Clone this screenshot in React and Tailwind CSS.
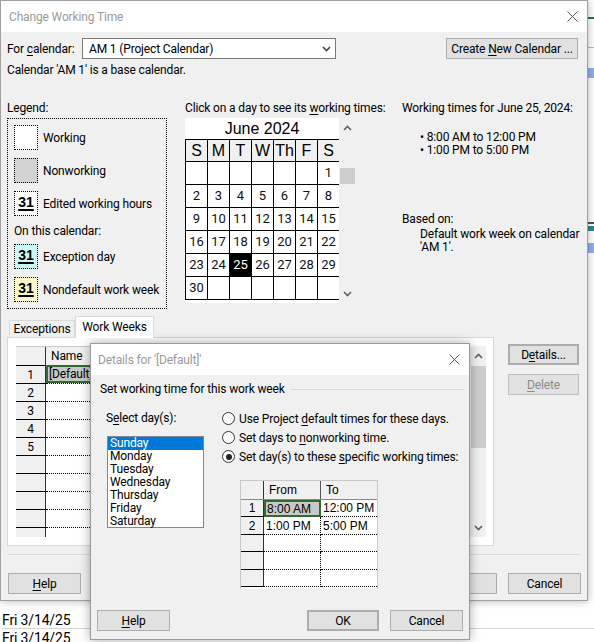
import React from "react";

const ui = "font-['Roboto','Noto_Sans',sans-serif] text-[12px] leading-[14px] tracking-[-0.15px] text-black";
const arial = "font-['Liberation_Sans',Arial,sans-serif] tracking-normal";

function U({ children }) {
  return <span className="underline underline-offset-[2px]">{children}</span>;
}

function Btn({ children, className = "" }) {
  return (
    <div className={`h-[21px] flex items-center justify-center bg-[#e1e1e1] border border-[#adadad] ${className}`}>
      <span className="whitespace-nowrap">{children}</span>
    </div>
  );
}

function CloseX() {
  return (
    <svg width="11" height="11" viewBox="0 0 11 11">
      <path d="M0.5 0.5 L10.5 10.5 M10.5 0.5 L0.5 10.5" stroke="#555" strokeWidth="1" fill="none" />
    </svg>
  );
}

function Chevron({ up, color = "#606060" }) {
  return (
    <svg width="9" height="6" viewBox="0 0 9 6">
      <path d={up ? "M1 5 L4.5 1.5 L8 5" : "M1 1 L4.5 4.5 L8 1"} stroke={color} strokeWidth="1.6" fill="none" />
    </svg>
  );
}

function Swatch({ bg, num }) {
  return (
    <div className={`w-[24px] h-[25px] border border-dotted border-black flex justify-center pt-[3px] ${bg}`}>
      {num && (
        <span className={`${arial} font-bold text-[14px] leading-[14px] underline underline-offset-[2px] decoration-[1.5px]`}>
          31
        </span>
      )}
    </div>
  );
}

function LegendItem({ bg, num, label, className = "" }) {
  return (
    <div className={`flex items-center gap-[5px] ${className}`}>
      <Swatch bg={bg} num={num} />
      <span>{label}</span>
    </div>
  );
}

const weeks = [
  [null, null, null, null, null, null, 1],
  [2, 3, 4, 5, 6, 7, 8],
  [9, 10, 11, 12, 13, 14, 15],
  [16, 17, 18, 19, 20, 21, 22],
  [23, 24, 25, 26, 27, 28, 29],
  [30, null, null, null, null, null, null],
];

function Calendar() {
  const heads = ["S", "M", "T", "W", "Th", "F", "S"];
  return (
    <div className="flex mt-[3px]">
      <div className="w-[154px] h-[185px] bg-white overflow-hidden">
        <div className={`${arial} h-[21px] flex items-center justify-center text-[16px]`}>June 2024</div>
        <div className="grid grid-cols-[repeat(7,21px)] gap-px bg-black p-px w-[155px]">
          {heads.map((h, i) => (
            <div key={i} className={`${arial} h-[21px] bg-[#f0f0f0] flex items-center justify-center text-[16px]`}>
              {h}
            </div>
          ))}
          {weeks.flat().map((d, i) => (
            <div
              key={i}
              className={`h-[22px] flex items-center justify-center text-[13px] tracking-normal ${
                d === 25 ? "bg-black text-white" : "bg-white text-[#111]"
              }`}
            >
              {d}
            </div>
          ))}
        </div>
      </div>
      <div className="w-[16px] h-[185px] flex flex-col items-center">
        <div className="mt-[7px]">
          <Chevron up />
        </div>
        <div className="mt-[37px] w-[15px] h-[16px] bg-[#cdcdcd]" />
        <div className="mt-auto mb-[6px]">
          <Chevron />
        </div>
      </div>
    </div>
  );
}

function WorkWeeksGrid() {
  const rows = [1, 2, 3, 4, 5, null, null, null, null, null];
  return (
    <div className="w-[470px] h-[191px] flex overflow-hidden">
      <div className="w-[454px] flex flex-col">
        <div className="flex h-[19px] shrink-0 bg-[#f0f0f0] border-t border-[#c8c8c8]">
          <div className="w-[30px] border-r border-[#333]" />
          <div className="pl-[5px] flex items-center">Name</div>
        </div>
        {rows.map((n, i) => (
          <div key={i} className="flex h-[18px] shrink-0">
            <div className="w-[30px] bg-[#f0f0f0] border-t border-black border-r border-r-[#333] flex items-center justify-center">
              {n}
            </div>
            {i === 0 ? (
              <div className="w-[60px] bg-[#c8c8c8] border-2 border-[#2f6b2f] flex items-center pl-[1px] overflow-hidden whitespace-nowrap">
                [Default]
              </div>
            ) : (
              <div className="flex-1 border-t border-dotted border-black" />
            )}
          </div>
        ))}
      </div>
      <div className="w-[16px] bg-[#f0f0f0] flex flex-col items-center">
        <div className="mt-[7px]">
          <Chevron up />
        </div>
        <div className="mt-[7px] w-[15px] h-[82px] bg-[#cdcdcd]" />
        <div className="mt-auto mb-[6px]">
          <Chevron />
        </div>
      </div>
    </div>
  );
}

function Radio({ on, children }) {
  return (
    <div className="flex items-center h-[19px]">
      <div className="w-[13px] h-[13px] rounded-full border border-[#333] bg-white flex items-center justify-center">
        {on && <div className="w-[6px] h-[6px] rounded-full bg-[#222]" />}
      </div>
      <span className="ml-[4px] whitespace-nowrap">{children}</span>
    </div>
  );
}

function TimeGrid() {
  const rows = [
    ["8:00 AM", "12:00 PM", 17],
    ["1:00 PM", "5:00 PM", 18],
    ["", "", 17],
    ["", "", 18],
    ["", "", 17],
  ];
  return (
    <div className={`${arial} w-[138px] h-[109px] bg-white border-t border-x border-[#c8c8c8] flex flex-col`}>
      <div className="flex h-[19px] bg-[#f0f0f0] border-b border-[#888]">
        <div className="w-[23px] border-r border-[#333]" />
        <div className="w-[57px] border-r border-[#555] pl-[5px] flex items-center">From</div>
        <div className="flex-1 pl-[5px] flex items-center">To</div>
      </div>
      {rows.map(([a, b, h], i) => (
        <div key={i} className="flex" style={{ height: h }}>
          <div className="w-[23px] bg-[#f0f0f0] border-r border-[#333] border-b border-b-black flex items-center justify-center">
            {i < 2 ? i + 1 : ""}
          </div>
          {i === 0 ? (
            <div className="w-[57px] bg-[#c8c8c8] border-2 border-[#2f6b2f] flex items-center pl-[1px]">{a}</div>
          ) : (
            <div className="w-[57px] border-r border-dotted border-black border-b flex items-center pl-[2px]">{a}</div>
          )}
          <div className="flex-1 border-b border-dotted border-black flex items-center pl-[2px]">{b}</div>
        </div>
      ))}
    </div>
  );
}

function DetailsDialog() {
  const days = ["Sunday", "Monday", "Tuesday", "Wednesday", "Thursday", "Friday", "Saturday"];
  return (
    <div className="absolute left-[90px] top-[343px] w-[380px] h-[297px] border border-[#9a9a9a] bg-[#f0f0f0] shadow-[0_0_10px_rgba(0,0,0,0.35)] flex flex-col">
      <div className="h-[31px] bg-white flex items-center justify-between pl-[7px] pr-[9px] text-[#9a9a9a]">
        <span>Details for '[Default]'</span>
        <CloseX />
      </div>
      <div className="mt-[7px] flex items-center pl-[9px] pr-[5px] h-[14px]">
        <span>Set working time for this work week</span>
        <div className="flex-1 h-px bg-[#d9d9d9] ml-[6px]" />
      </div>
      <div className="flex pl-[15px] mt-[13px]">
        <div className="w-[116px] flex flex-col">
          <div className="mt-[2px] h-[14px]">
            S<U>e</U>lect day(s):
          </div>
          <div className="mt-[11px] ml-[1px] w-[97px] h-[92px] border border-[#828790] bg-white flex flex-col">
            {days.map((d, i) => (
              <div key={d} className={`h-[13px] leading-[13px] pl-[2px] ${i === 0 ? "bg-[#0078d7] text-white" : ""}`}>
                {d}
              </div>
            ))}
          </div>
        </div>
        <div className="flex flex-col">
          <Radio>
            Use Project <U>d</U>efault times for these days.
          </Radio>
          <Radio>
            Set days to <U>n</U>onworking time.
          </Radio>
          <Radio on>
            Set day(s) to these <U>s</U>pecific working times:
          </Radio>
          <div className="mt-[14px] ml-[18px]">
            <TimeGrid />
          </div>
        </div>
      </div>
      <div className="mt-auto mb-[8px] flex pl-[6px] pr-[6px]">
        <Btn className="w-[73px]">
          <U>H</U>elp
        </Btn>
        <Btn className="ml-auto w-[72px] border-2 border-[#0078d7]">OK</Btn>
        <Btn className="ml-[11px] w-[73px]">Cancel</Btn>
      </div>
    </div>
  );
}

export default function App() {
  return (
    <div className={`${ui} relative w-[594px] h-[642px] bg-white overflow-hidden`}>
      {/* app behind the dialogs */}
      <div className="absolute left-[588px] top-[17px] w-[6px] h-[2px] bg-[#217346]" />
      <div className="absolute left-[588px] top-[47px] w-[6px] h-px bg-[#bbb]" />
      <div className="absolute left-[588px] top-[68px] w-[6px] h-[10px] bg-[#8fb2e6]" />
      <div className="absolute left-[588px] top-[222px] w-[6px] h-[2px] bg-[#555]" />
      <div className="absolute left-[588px] top-[226px] w-[6px] h-[5px] bg-[#2e8b8b]" />
      <div className="absolute left-[588px] top-[243px] w-[6px] h-[10px] bg-[#8fb2e6]" />

      <div className="relative w-[588px] h-[601px] bg-[#f0f0f0] border border-[#a0a0a0] shadow-[0_0_8px_rgba(0,0,0,0.3)] flex flex-col">
        <div className="h-[31px] bg-white flex items-center justify-between pl-[8px] pr-[9px] text-[#9a9a9a]">
          <span>Change Working Time</span>
          <CloseX />
        </div>

        <div className="flex flex-col px-[6px]">
          <div className="mt-[6px] h-[21px] flex items-center">
            <span className="w-[75px]">
              For <U>c</U>alendar:
            </span>
            <div className="w-[254px] h-[21px] border border-[#7a7a7a] bg-white flex items-center justify-between pl-[6px] pr-[4px]">
              <span>AM 1 (Project Calendar)</span>
              <Chevron color="#444" />
            </div>
            <Btn className="ml-auto mr-[3px] w-[132px]">
              Create <U>N</U>ew Calendar ...
            </Btn>
          </div>
          <div className="mt-[4px] h-[14px]">Calendar 'AM 1' is a base calendar.</div>

          <div className="mt-[24px] flex">
            <div className="w-[160px] flex flex-col">
              <div className="h-[14px]">Legend:</div>
              <div className="mt-[3px] h-[191px] border border-dotted border-black pl-[6px] pt-[6px] flex flex-col">
                <LegendItem bg="bg-white" label="Working" />
                <LegendItem bg="bg-[#d3d3d3]" label="Nonworking" className="mt-[8px]" />
                <LegendItem bg="bg-white" num label="Edited working hours" className="mt-[8px]" />
                <div className="mt-[8px] h-[14px]">On this calendar:</div>
                <LegendItem bg="bg-[#ccf5f5]" num label="Exception day" className="mt-[6px]" />
                <LegendItem bg="bg-[#fbf7c8]" num label="Nondefault work week" className="mt-[8px]" />
              </div>
            </div>

            <div className="ml-[18px] w-[170px] flex flex-col">
              <div className="h-[14px] whitespace-nowrap">
                Click on a day to see its <U>w</U>orking times:
              </div>
              <Calendar />
            </div>

            <div className="ml-[47px] flex flex-col whitespace-nowrap">
              <div className="h-[14px]">Working times for June 25, 2024:</div>
              <div className="mt-[16px] pl-[18px] leading-[13px]">
                <div>• 8:00 AM to 12:00 PM</div>
                <div>• 1:00 PM to 5:00 PM</div>
              </div>
              <div className="mt-[55px] h-[14px]">Based on:</div>
              <div className="mt-[2px] pl-[18px] leading-[13px]">
                <div>Default work week on calendar</div>
                <div>'AM 1'.</div>
              </div>
            </div>
          </div>

          <div className="mt-[7px] flex">
            <div className="flex flex-col">
              <div className="h-[21px] flex items-end pl-[2px]">
                <div className="w-[66px] h-[17px] bg-[#f0f0f0] border border-b-0 border-[#d9d9d9] flex items-center justify-center">
                  Exceptions
                </div>
                <div className="relative z-10 -mb-px w-[79px] h-[22px] bg-white border border-b-0 border-[#d9d9d9] flex items-center justify-center pb-[2px]">
                  Work Weeks
                </div>
              </div>
              <div className="w-[487px] h-[209px] border border-[#d9d9d9] bg-white pt-[8px] pl-[8px]">
                <WorkWeeksGrid />
              </div>
            </div>
            <div className="ml-[14px] pt-[28px] flex flex-col">
              <Btn className="w-[71px] h-[20px] border-2 border-[#0078d7]">
                D<U>e</U>tails...
              </Btn>
              <Btn className="mt-[9px] w-[71px] bg-[#cccccc] border-[#bfbfbf] text-[#8a8a8a]">
                <U>D</U>elete
              </Btn>
            </div>
          </div>

          <div className="mt-[8px] w-[573px] h-px bg-[#d9d9d9]" />
          <div className="mt-[18px] flex">
            <Btn className="ml-[1px] w-[73px]">
              <U>H</U>elp
            </Btn>
            <Btn className="ml-auto w-[73px]">OK</Btn>
            <Btn className="ml-[11px] w-[73px]">Cancel</Btn>
          </div>
        </div>
      </div>

      <div className="mt-[10px] text-[14px] leading-[18px] pl-[2px]">
        <div className="h-[18px] border-b border-[#d4d4d4]">Fri 3/14/25</div>
        <div className="h-[18px]">Fri 3/14/25</div>
      </div>

      <DetailsDialog />
    </div>
  );
}
